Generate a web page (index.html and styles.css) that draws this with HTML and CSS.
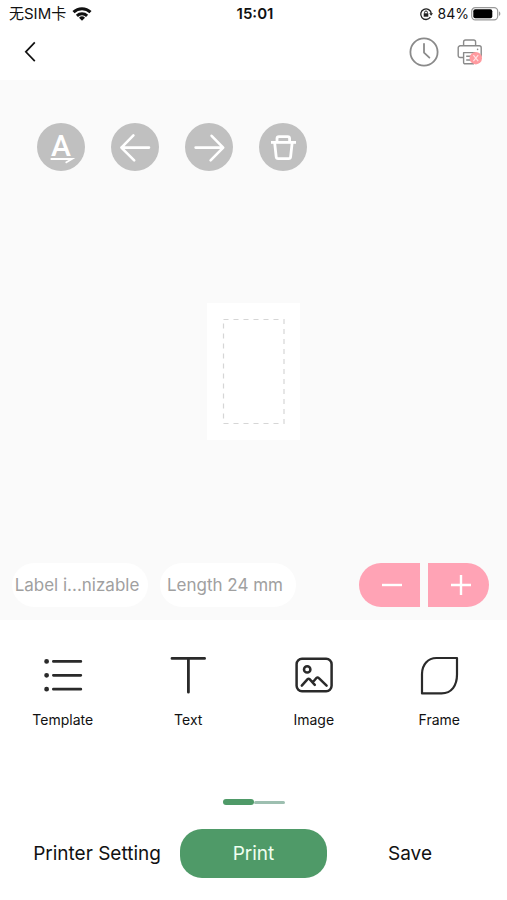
FILE: index.html
```html
<!DOCTYPE html>
<html lang="en">
<head>
    <meta charset="UTF-8">
    <meta name="viewport" content="width=device-width, initial-scale=1.0">
    <title>Label Editor</title>
    <link rel="stylesheet" href="styles.css">
</head>
<body>
    <div class="status-bar">
        <div class="status-left">
            <span class="carrier">无SIM卡</span>
            <svg width="20" height="16" viewBox="0 0 20 16" fill="none" stroke="#111" stroke-width="3">
                <path d="M1.5 6.2a12.3 12.3 0 0 1 17 0"/>
                <path d="M4.9 9.8a7.4 7.4 0 0 1 10.2 0"/>
                <path d="M10 14.8l-3-3a4.3 4.3 0 0 1 6 0z" fill="#111" stroke="none"/>
            </svg>
        </div>
        <span class="clock">15:01</span>
        <div class="status-right">
            <svg width="14" height="14" viewBox="0 0 14 14" fill="none" stroke="#222" stroke-width="1.3">
                <path d="M11.4 10.2A5.3 5.3 0 1 1 12.3 6.6"/>
                <path d="M10.2 6.2h3.8l-1.9 2.6z" fill="#222" stroke="none"/>
                <rect x="4.7" y="6.3" width="4.6" height="3.4" fill="#222" stroke="none"/>
                <path d="M5.6 6.5V5.4a1.4 1.4 0 0 1 2.8 0v1.1" stroke-width="1"/>
            </svg>
            <span class="percent">84%</span>
            <svg width="30" height="14" viewBox="0 0 30 14">
                <rect x="0.7" y="0.7" width="26" height="12.2" rx="3.6" fill="none" stroke="#999" stroke-width="1.2"/>
                <rect x="2.3" y="2.3" width="19" height="9" rx="2" fill="#000"/>
                <path d="M28 4.6v4.4c1.8-.6 1.8-3.8 0-4.4z" fill="#999"/>
            </svg>
        </div>
    </div>

    <header class="nav">
        <button type="button" class="icon-button" aria-label="Back">
            <svg width="12" height="22" viewBox="0 0 12 22" fill="none" stroke="#111" stroke-width="1.7">
                <path d="M10.800 1.400L1.800 10.800l9 9.400"/>
            </svg>
        </button>
        <div class="nav-actions">
            <button type="button" class="icon-button" aria-label="History">
                <svg width="30" height="30" viewBox="0 0 30 30" fill="none" stroke="#8a8a8a" stroke-width="1.8" stroke-linecap="round" stroke-linejoin="round">
                    <circle cx="15" cy="15" r="13.6"/>
                    <path d="M15 6.800V15.600L20.400 20.600"/>
                </svg>
            </button>
            <button type="button" class="icon-button" aria-label="Printer not connected">
                <svg width="26" height="28" viewBox="0 0 26 28" fill="none" stroke="#8a8a8a" stroke-width="1.4" stroke-linejoin="round">
                    <path d="M6.600 7.600V4a2 2 0 0 1 2-2h8a2 2 0 0 1 2 2v3.600"/>
                    <path d="M6.400 19.500H3.200a2 2 0 0 1-2-2V9.800a2 2 0 0 1 2-2h19a2 2 0 0 1 2 2v7.700a2 2 0 0 1-1.600 2"/>
                    <path d="M18.600 14.600H6.600v9.800a1.400 1.400 0 0 0 1.400 1.400h9"/>
                    <path d="M9.200 18.300h6M9.200 22h6"/>
                    <circle cx="20.6" cy="11.4" r=".8" fill="#8a8a8a" stroke="none"/>
                    <circle cx="18.8" cy="20.2" r="6.2" fill="#ff9a9f" stroke="none"/>
                    <path d="M16.400 17.200l4.800 6M21.200 17.200l-4.800 6" stroke="#ffe0e2" stroke-width="1.2"/>
                </svg>
            </button>
        </div>
    </header>

    <main class="editor">
        <div class="edit-tools">
            <button type="button" class="round-button" aria-label="Text direction">
                <svg width="48" height="48" viewBox="0 0 48 48" fill="none" stroke="#fff" stroke-width="1.8">
                    <text class="letter" x="24" y="33" text-anchor="middle">A</text>
                    <path d="M13.600 36H35l-6.400 3.800"/>
                </svg>
            </button>
            <button type="button" class="round-button" aria-label="Undo">
                <svg width="48" height="48" viewBox="0 0 48 48" fill="none" stroke="#fff" stroke-width="2.6" stroke-linecap="round" stroke-linejoin="round">
                    <path d="M38 24.600H10.400M22.400 12.400l-12 12.200 12.800 12.800"/>
                </svg>
            </button>
            <button type="button" class="round-button" aria-label="Redo">
                <svg width="48" height="48" viewBox="0 0 48 48" fill="none" stroke="#fff" stroke-width="2.6" stroke-linecap="round" stroke-linejoin="round">
                    <path d="M10.600 24.600H38M26.600 12.800l11.600 11.800-12.600 12.800"/>
                </svg>
            </button>
            <button type="button" class="round-button" aria-label="Delete">
                <svg width="48" height="48" viewBox="0 0 48 48" fill="none" stroke="#fff" stroke-width="2.8" stroke-linejoin="round">
                    <path d="M12 19.400h25"/>
                    <path d="M18 19v-3.400a2 2 0 0 1 2-2h8.600a2 2 0 0 1 2 2V19"/>
                    <path d="M15.600 19.400l1.600 14.400a2 2 0 0 0 2 1.800h10.400a2 2 0 0 0 2-1.800l1.600-14.400"/>
                </svg>
            </button>
        </div>

        <div class="stage">
            <div class="sheet">
                <svg class="print-area" width="63" height="107" viewBox="0 0 63 107" fill="none" stroke="#d6d6d6" stroke-width="1.2" stroke-dasharray="5 5">
                    <rect x="1.5" y="1.5" width="60.5" height="104"/>
                </svg>
            </div>
        </div>

        <div class="label-bar">
            <button type="button" class="pill">Label i...nizable</button>
            <button type="button" class="pill">Length 24 mm</button>
            <div class="stepper">
                <button type="button" class="step step-minus" aria-label="Decrease length">
                    <svg width="22" height="22" viewBox="0 0 22 22" stroke="#fff" stroke-width="2.4"><path d="M1 11h20"/></svg>
                </button>
                <button type="button" class="step step-plus" aria-label="Increase length">
                    <svg width="22" height="22" viewBox="0 0 22 22" stroke="#fff" stroke-width="2.4"><path d="M1 11h20M11 1v20"/></svg>
                </button>
            </div>
        </div>
    </main>

    <div class="insert-tools">
        <button type="button" class="tool">
            <svg width="40" height="40" viewBox="0 0 40 40" fill="none" stroke="#2a2a2a" stroke-width="2.8" stroke-linecap="round">
                <path d="M10.400 6.400h27.400M10.400 20.300h27.400M10.400 34.200h27.400"/>
                <path d="M3.600 6.400h.01M3.600 20.300h.01M3.600 34.200h.01" stroke-width="4.8"/>
            </svg>
            <span>Template</span>
        </button>
        <button type="button" class="tool">
            <svg width="40" height="40" viewBox="0 0 40 40" fill="none" stroke="#2a2a2a" stroke-width="2.8" stroke-linecap="round">
                <path d="M4 3.400h32.600M20.400 3.600v33.600"/>
            </svg>
            <span>Text</span>
        </button>
        <button type="button" class="tool">
            <svg width="40" height="40" viewBox="0 0 40 40" fill="none" stroke="#2a2a2a" stroke-width="2.5" stroke-linecap="round" stroke-linejoin="round">
                <rect x="2.6" y="3.8" width="35" height="32.4" rx="5.4"/>
                <circle cx="13.2" cy="14.4" r="3.2"/>
                <path d="M7.800 30.600l5.800-6.400a1.400 1.400 0 0 1 2 0l5.200 5.600M19 27l3.600-4.200a1.400 1.400 0 0 1 2 0l8 7.800"/>
            </svg>
            <span>Image</span>
        </button>
        <button type="button" class="tool">
            <svg width="40" height="40" viewBox="0 0 40 40" fill="none" stroke="#2a2a2a" stroke-width="2.2" stroke-linejoin="round">
                <path d="M17.400 3H38v16.600C38 30.600 32.600 38.400 22.600 38.400H3V19C3 9.400 9 3 17.400 3z"/>
            </svg>
            <span>Frame</span>
        </button>
    </div>

    <div class="pager">
        <span class="page-mark active"></span>
        <span class="page-mark"></span>
    </div>

    <footer class="actions">
        <button type="button" class="action">Printer Setting</button>
        <button type="button" class="action primary">Print</button>
        <button type="button" class="action">Save</button>
    </footer>
</body>
</html>
```
FILE: styles.css
```css
* {
    box-sizing: border-box;
}
body {
    font-family: Inter, "Noto Sans CJK SC", sans-serif;
    background-color: #fff;
    color: #111;
    margin: 0;
    min-height: 100vh;
    display: flex;
    flex-direction: column;
}
button {
    font-family: inherit;
    color: inherit;
    background: none;
    border: none;
    padding: 0;
    cursor: pointer;
}
svg {
    display: block;
}

/* Status bar */
.status-bar {
    display: grid;
    grid-template-columns: 1fr auto 1fr;
    align-items: center;
    height: 28px;
    padding: 0 6px 0 9px;
    font-size: 14px;
    line-height: 20px;
}
.status-left, .status-right {
    display: flex;
    align-items: center;
    gap: 6px;
}
.status-right {
    justify-content: flex-end;
    gap: 5px;
}
.carrier {
    font-size: 15px;
}
.percent {
    margin-right: -3px;
}
.clock {
    font-size: 15px;
    font-weight: 600;
}

/* Navigation */
.nav {
    display: flex;
    align-items: center;
    justify-content: space-between;
    height: 52px;
    padding: 0 24px 4px;
}
.nav-actions {
    display: flex;
    align-items: center;
    gap: 18px;
}

/* Editor */
.editor {
    flex: 1;
    display: flex;
    flex-direction: column;
    background-color: #fafafa;
    padding: 43px 18px 13px 12px;
}
.edit-tools {
    display: flex;
    gap: 26px;
    padding-left: 25px;
}
.round-button {
    width: 48px;
    height: 48px;
    border-radius: 50%;
    background-color: #c0c0c0;
}
.letter {
    font-family: Roboto, sans-serif;
    font-size: 30px;
    font-weight: 500;
    fill: #fff;
    stroke: none;
}
.stage {
    flex: 1;
    display: flex;
    align-items: center;
    justify-content: center;
    padding: 8px 0 0 6px;
}
.sheet {
    background-color: #fff;
    padding: 15px;
}
.label-bar {
    display: flex;
    gap: 12px;
}
.pill {
    width: 136px;
    height: 44px;
    border-radius: 22px;
    background-color: #fff;
    color: #a0a0a0;
    font-size: 17px;
    white-space: nowrap;
    padding-right: 6px;
}
.stepper {
    display: flex;
    gap: 8px;
    margin-left: auto;
}
.step {
    display: flex;
    align-items: center;
    justify-content: center;
    width: 61px;
    height: 44px;
    background-color: #ffa3b5;
    padding-left: 5px;
}
.step-minus {
    border-radius: 22px 0 0 22px;
}
.step-plus {
    border-radius: 0 22px 22px 0;
}

/* Insert tools */
.insert-tools {
    display: grid;
    grid-template-columns: repeat(4, 1fr);
    padding: 35px 5px 0 0;
}
.tool {
    display: flex;
    flex-direction: column;
    align-items: center;
    gap: 15px;
    font-size: 14px;
    line-height: 20px;
}

/* Pager */
.pager {
    display: flex;
    align-items: center;
    justify-content: center;
    height: 6px;
    margin: 69px 0 24px;
}
.page-mark {
    width: 31px;
    height: 3px;
    border-radius: 2px;
    background-color: #9dbfb0;
}
.page-mark.active {
    height: 6px;
    border-radius: 3px;
    background-color: #4f9a68;
}

/* Bottom actions */
.actions {
    display: grid;
    grid-template-columns: 1fr 147px 1fr;
    padding: 0 14px 22px;
}
.action {
    height: 49px;
    font-size: 19px;
}
.action.primary {
    background-color: #4f9a68;
    color: #f0fff0;
    border-radius: 22px;
}
```
